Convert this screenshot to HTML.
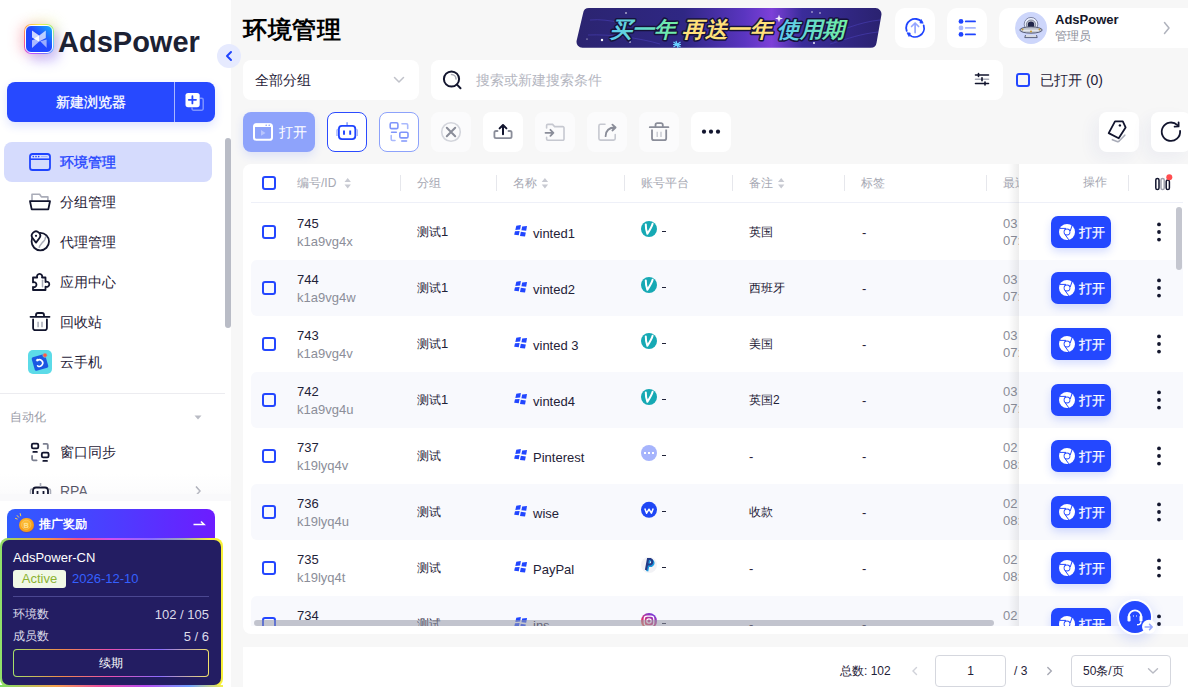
<!DOCTYPE html>
<html><head><meta charset="utf-8">
<style>
*{margin:0;padding:0;box-sizing:border-box}
html,body{width:1188px;height:687px;overflow:hidden;background:#f7f7f7;font-family:"Liberation Sans",sans-serif;color:#1f2238}
body{position:relative}
.a{position:absolute}
svg{position:absolute;overflow:visible}
#side{left:0;top:0;width:231px;height:687px;background:#fff;overflow:hidden}
.logoring{left:24px;top:24px;width:30px;height:30px;border-radius:7px;background:conic-gradient(from 0deg,#f5f04a,#9ef07a 15%,#6fd0ff 30%,#7a6cff 45%,#c050ff 58%,#ff5a8a 72%,#ffa050 86%,#f5f04a);box-shadow:-5px 0 12px rgba(255,120,140,.3),5px 7px 12px rgba(120,90,255,.35),4px -4px 12px rgba(220,240,120,.3)}.logo{left:25px;top:25px;width:28px;height:28px;border-radius:6px;background:linear-gradient(45deg,#2146ff 0%,#2247ff 55%,#1a8cff 85%,#12b4ff 100%);border:1px solid #fff}
.logotxt{left:58px;top:26px;font-size:29px;font-weight:bold;color:#1c2133;letter-spacing:0px;line-height:32px}
.collapse{left:217px;top:44px;width:24px;height:24px;border-radius:50%;background:#e6eafe}
.newbtn{left:7px;top:82px;width:208px;height:40px;border-radius:8px;background:#2749ff;box-shadow:0 4px 10px rgba(39,73,255,.15)}
.newbtn .t{left:0;width:167px;top:0;height:40px;line-height:40px;text-align:center;color:#fff;font-size:14px;-webkit-text-stroke:0.3px #fff}
.newbtn .d{left:167px;top:0;width:1px;height:40px;background:rgba(255,255,255,.6)}
.mi{left:4px;width:208px;height:40px;border-radius:8px}
.mi .t{left:56px;top:0;line-height:40px;font-size:14px;color:#1f2238}
.act{background:#d5dbfd}
.act .t{color:#2445ff;-webkit-text-stroke:0.35px #2445ff}
.sbar{left:225px;top:138px;width:6px;height:190px;border-radius:3px;background:#b9bcc6}
.card{background:#fff;border-radius:8px}
.tb{width:40px;height:40px;border-radius:8px;background:#fff;top:112px}
.tbf{background:#fbfbfc}
.th{top:165px;height:37px;line-height:37px;font-size:12px;color:#a6a8b3;white-space:nowrap}
.hd{top:175px;width:1px;height:16px;background:#e6e7ec}
.cb{width:14px;height:14px;border:2px solid #2447ff;border-radius:3px}
.row{left:251px;width:932px;height:56px;border-radius:6px}
.alt{background:#f8f9fd}
.c{font-size:13px;color:#1f2238;white-space:nowrap;line-height:16px}
.g{color:#8b8e99}
.ob{left:1051px;width:60px;height:32px;border-radius:7px;background:#2448ff;box-shadow:0 4px 8px rgba(36,72,255,.18);color:#fff;font-size:13px;-webkit-text-stroke:0.25px #fff}
</style></head><body>
<div id="side" class="a">
<div class="a logoring"></div>
<div class="a logo"></div>
<div class="a logotxt">AdsPower</div>
<div class="a newbtn"><div class="a t">新建浏览器</div><div class="a d"></div></div>
<div class="a mi act" style="top:142px"><div class="a t">环境管理</div></div>
<div class="a mi" style="top:182px"><div class="a t">分组管理</div></div>
<div class="a mi" style="top:222px"><div class="a t">代理管理</div></div>
<div class="a mi" style="top:262px"><div class="a t">应用中心</div></div>
<div class="a mi" style="top:302px"><div class="a t">回收站</div></div>
<div class="a mi" style="top:342px"><div class="a t">云手机</div></div>
<div class="a" style="left:0;top:393px;width:225px;height:1px;background:#ececf0"></div>
<div class="a" style="left:10px;top:410px;font-size:12px;line-height:15px;color:#9a9ca8">自动化</div>
<svg style="left:193px;top:414px" width="10" height="7"><path d="M1.5 1.5 L8.5 1.5 L5 5.5 Z" fill="#b9bbc4"/></svg>
<div class="a mi" style="top:432px"><div class="a t">窗口同步</div></div>
<div class="a mi" style="top:471px"><div class="a t">RPA</div></div>
<svg style="left:194px;top:485px" width="8" height="12"><path d="M2 1.5 L6 6 L2 10.5" fill="none" stroke="#9a9ca8" stroke-width="1.5"/></svg>
<div class="a" style="left:0;top:474px;width:231px;height:20px;background:linear-gradient(180deg,rgba(250,250,252,0),rgba(244,244,247,.35))"></div>
<div class="a" style="left:0;top:494px;width:231px;height:7px;background:#f9f9fb"></div>
<div class="a" style="left:0;top:501px;width:231px;height:186px;background:#fff"></div>
<div class="a" style="left:7px;top:509px;width:208px;height:34px;border-radius:8px 8px 0 0;background:linear-gradient(90deg,#2f5cff 0%,#4f3bff 55%,#6d1cff 100%)"></div>
<div class="a" style="left:19px;top:517.5px;width:14.5px;height:14.5px;border-radius:50%;background:radial-gradient(circle at 45% 40%,#ffc840,#f59a16 65%,#e07a10);box-shadow:0 1px 1px rgba(150,60,0,.3)"></div>
<div class="a" style="left:39px;top:517px;font-size:12px;font-weight:bold;line-height:15px;color:#fff">推广奖励</div>
<svg style="left:193px;top:520px" width="12" height="8"><path d="M0.5 4.5 H11 L8 1.5" fill="none" stroke="#fff" stroke-width="1.6"/></svg>
<div class="a" style="left:0;top:538px;width:223px;height:149px;border-radius:8px;background:linear-gradient(90deg,#8fe06a 0%,#f59a3c 20%,#f0508a 35%,#d04ff0 50%,#8a6cff 68%,#9aa8b8 82%,#f7f03a 94%)"></div>
<div class="a" style="left:0;top:685px;width:223px;height:2px;background:linear-gradient(90deg,#7ee067,#f6a04d 25%,#ec4fa0 45%,#b84cf2 65%,#6fa0ff 85%,#f6f04a)"></div>
<div class="a" style="left:2px;top:540px;width:219px;height:145px;border-radius:7px;background:#231d62"></div>
<div class="a" style="left:13px;top:550px;font-size:13px;line-height:15px;color:#fff">AdsPower-CN</div>
<div class="a" style="left:13px;top:570px;width:53px;height:18px;border-radius:3px;background:#f1f8e6;color:#8cb332;font-size:13px;line-height:18px;text-align:center">Active</div>
<div class="a" style="left:72px;top:571px;font-size:13px;line-height:16px;color:#3560ff">2026-12-10</div>
<div class="a" style="left:13px;top:596px;width:196px;height:1px;background:#4b4791"></div>
<div class="a" style="left:13px;top:607px;font-size:12px;line-height:15px;color:#dcdbea">环境数</div>
<div class="a" style="left:109px;top:607px;width:100px;text-align:right;font-size:13px;line-height:15px;color:#dcdbea">102 / 105</div>
<div class="a" style="left:13px;top:629px;font-size:12px;line-height:15px;color:#dcdbea">成员数</div>
<div class="a" style="left:109px;top:629px;width:100px;text-align:right;font-size:13px;line-height:15px;color:#dcdbea">5 / 6</div>
<div class="a" style="left:13px;top:649px;width:196px;height:28px;border-radius:4px;background:linear-gradient(90deg,#a6e06a,#f08a4a 25%,#e94fb0 50%,#8c6cff 75%,#f3e36a)"></div>
<div class="a" style="left:14px;top:650px;width:194px;height:26px;border-radius:3px;background:#231d62;color:#fff;font-size:12px;line-height:26px;text-align:center">续期</div>
<div class="a sbar"></div>
</div>
<div class="a collapse"></div>
<svg style="left:0;top:0;z-index:2" width="231" height="687" viewBox="0 0 231 687"><g fill="#fff"><path d="M32 30.5 L39.2 35.5 V41.5 L32 37.5 Z" opacity=".78"/><path d="M32 40.2 L37.2 38.6 L39.2 41.6 L32 48 Z" opacity=".62"/><path d="M45.8 30.5 V38 L39.2 41.5 V35.5 Z" opacity=".7"/><path d="M40.2 41.2 L46.6 39.6 V47.8 Z" opacity=".55"/><path d="M34 38.6 L39.2 35.6 V41.6 Z" opacity=".95"/></g><path d="M231 52 L227 56 L231 60" fill="none" stroke="#1f44ff" stroke-width="2" stroke-linecap="round" stroke-linejoin="round"/><path d="M199.7 98.2 H201.6 A1.6 1.6 0 0 1 203.2 99.8 V108.6 A1.6 1.6 0 0 1 201.6 110.2 H193.6 A1.6 1.6 0 0 1 192 108.6 V107.4" fill="none" stroke="#7d93ff" stroke-width="1.5"/><rect x="185.5" y="93" width="14.2" height="14.2" rx="2.6" fill="#fff"/><path d="M192.4 96.2 V103.4 M188.8 99.8 H196" stroke="#2749ff" stroke-width="1.8" stroke-linecap="round"/><rect x="30" y="154" width="20" height="16" rx="2.6" fill="none" stroke="#1f44ff" stroke-width="1.8"/><path d="M30 159.2 H50" stroke="#1f44ff" stroke-width="1.6"/><g fill="#1f44ff"><circle cx="33.3" cy="156.6" r=".8"/><circle cx="36" cy="156.6" r=".8"/><circle cx="38.7" cy="156.6" r=".8"/></g><path d="M41 156.6 H47.5" stroke="#8fa0ff" stroke-width=".8"/><path d="M32 201 V194.2 H39.6 L41.4 196.9 H47.9 V201" fill="none" stroke="#a9acb8" stroke-width="1.6" stroke-linejoin="round"/><path d="M30 201.2 H50 L48.3 209.4 H31.7 Z" fill="#fff" stroke="#12152e" stroke-width="1.8" stroke-linejoin="round"/><circle cx="40.3" cy="241.6" r="8.7" fill="#fff" stroke="#12152e" stroke-width="1.8"/><path d="M39.3 247.8 C39 245.5 41 245 41.8 243.3 C42.6 241.5 44 241.6 44.8 239.8 C45.3 238.6 45.2 237.5 46 236.4" fill="none" stroke="#a9acb8" stroke-width="1.5"/><path d="M36 242.6 L32.7 238.3 A4.2 4.2 0 1 1 39.3 238.3 Z" fill="#fff" stroke="#12152e" stroke-width="1.8" stroke-linejoin="round"/><circle cx="36" cy="235.8" r="1.1" fill="#12152e"/><path d="M33 277.5 H37.2 A2.6 2.6 0 1 1 42 277.5 H45.5 V282 A2.6 2.6 0 1 1 45.5 286.6 V290 H33 V287 A2.5 2.5 0 1 0 33 282.4 Z" fill="none" stroke="#12152e" stroke-width="1.8" stroke-linejoin="round"/><path d="M42.5 280.3 V286.8" stroke="#a9acb8" stroke-width="1.5" stroke-linecap="round"/><path d="M30.5 316.8 H49.5" stroke="#12152e" stroke-width="1.8" stroke-linecap="round"/><path d="M36 316.5 V315 A2 2 0 0 1 38 313 H42 A2 2 0 0 1 44 315 V316.5" fill="none" stroke="#12152e" stroke-width="1.8"/><path d="M33.1 319.3 V328 A2.2 2.2 0 0 0 35.3 330.2 H44.7 A2.2 2.2 0 0 0 46.9 328 V319.3" fill="none" stroke="#12152e" stroke-width="1.8" stroke-linecap="round"/><path d="M38.1 321.8 V327.2 M42 321.8 V327.2" stroke="#a9acb8" stroke-width="1.5"/><rect x="28" y="350" width="24" height="24" rx="5" fill="#5cdbe8"/><g transform="rotate(-16 40 362.5)"><rect x="33" y="355.5" width="14" height="14" rx="1.5" fill="#1b57e2"/></g><path d="M37.2 360.6 A3.3 3.3 0 1 1 37.6 365.8" fill="none" stroke="#fff" stroke-width="1.6" stroke-linecap="round"/><path d="M35.6 360.2 L37.6 358.4 L38.4 361.2 Z" fill="#fff"/><circle cx="45" cy="355.2" r="2.2" fill="#ff5a45" stroke="#5cdbe8" stroke-width=".6"/><g transform="translate(0 0)"><rect x="31.8" y="443.6" width="6.5" height="4.8" rx="1.3" fill="none" stroke="#12152e" stroke-width="1.8"/><path d="M33.3 451.9 H36.9" stroke="#12152e" stroke-width="1.8" stroke-linecap="round"/><rect x="41.8" y="452.6" width="6.8" height="4.8" rx="1.3" fill="none" stroke="#12152e" stroke-width="1.8"/><path d="M43.3 460.9 H47" stroke="#12152e" stroke-width="1.8" stroke-linecap="round"/><path d="M43.6 443.9 H46.6 A1.2 1.2 0 0 1 47.8 445.1 V448.6" fill="none" stroke="#7b7f90" stroke-width="1.8" stroke-linecap="round"/><path d="M32.1 456 V459.1 A1.2 1.2 0 0 0 33.3 460.3 H36.6" fill="none" stroke="#7b7f90" stroke-width="1.8" stroke-linecap="round"/></g><clipPath id="rpc"><rect x="0" y="470" width="231" height="24"/></clipPath><g clip-path="url(#rpc)"><rect x="33" y="487.5" width="15" height="14" rx="3" fill="none" stroke="#12152e" stroke-width="1.8"/><path d="M40.5 483 V487" stroke="#a9acb8" stroke-width="1.6"/><path d="M30.5 495 V490.5 A1.5 1.5 0 0 1 32 489 M50.5 495 V490.5 A1.5 1.5 0 0 0 49 489" fill="none" stroke="#a9acb8" stroke-width="1.5"/><path d="M37.5 491 V495 M43.5 491 V495" stroke="#12152e" stroke-width="1.8"/></g><path d="M17.2 515.6 L18.6 517.2 M20.2 513.6 L20.7 515.8 M15.5 518.4 L17.2 519" stroke="#ffd24a" stroke-width="1" stroke-linecap="round"/><circle cx="26.2" cy="524.8" r="4.6" fill="none" stroke="#ffe08a" stroke-width=".7" opacity=".6"/><text x="26.2" y="527.6" font-family="Liberation Sans, sans-serif" font-size="7.5" font-weight="bold" fill="#ffe6a0" text-anchor="middle" opacity=".85">B</text></svg><div class="a" style="left:243px;top:16px;font-size:24px;font-weight:bold;color:#000;line-height:28px;letter-spacing:0.5px">环境管理</div>
<svg style="left:0;top:0" width="1188" height="60" viewBox="0 0 1188 60">
<defs>
<linearGradient id="bng" x1="0" x2="1" y1="0" y2="0">
<stop offset="0" stop-color="#2b2470"/><stop offset=".35" stop-color="#2f2784"/><stop offset=".55" stop-color="#5a35c0"/><stop offset=".64" stop-color="#7d40d8"/><stop offset=".74" stop-color="#3a2c9a"/><stop offset="1" stop-color="#2a2270"/>
</linearGradient>
<linearGradient id="tg1" x1="0" x2="1"><stop offset="0" stop-color="#5cc8f2"/><stop offset="1" stop-color="#72f0a0"/></linearGradient>
<linearGradient id="tg2" x1="0" x2="1"><stop offset="0" stop-color="#5cc8f2"/><stop offset="1" stop-color="#72f0a0"/></linearGradient>
</defs>
<path d="M589 8 H875.5 A6 6 0 0 1 881.4 15 L876.6 42.5 A6 6 0 0 1 870.7 47.8 H582.5 A6 6 0 0 1 576.6 40.8 L583.1 13.3 A6 6 0 0 1 589 8 Z" fill="url(#bng)"/>
<g fill="none" stroke="#4a3fb8" stroke-width="1" opacity=".6"><path d="M590 20 C610 18 630 26 650 30 M588 35 C610 34 640 38 660 44"/><path d="M820 40 C840 30 860 22 880 20 M830 44 C850 38 860 34 878 32"/></g>
<g fill="#fff"><circle cx="626" cy="13" r=".8"/><circle cx="602" cy="40" r="1.2"/><circle cx="630" cy="42" r=".8"/><circle cx="812" cy="12" r=".7"/><circle cx="820" cy="13" r=".7"/><circle cx="814" cy="43" r=".9"/><circle cx="587" cy="39" r=".6"/></g>
<path d="M779 14.5 L780 17.5 L783 18.5 L780 19.5 L779 22.5 L778 19.5 L775 18.5 L778 17.5 Z" fill="#fff" opacity=".9"/>
<path d="M676 41 L678 48 M673 44.5 L681 44.5 M673.5 42 L680.5 47 M680.5 42 L673.5 47" stroke="#6ad0ff" stroke-width="1.2"/>
<g font-family="Liberation Sans, sans-serif" font-size="22" font-weight="bold" font-style="italic" stroke="#15123a" stroke-width="3" paint-order="stroke" stroke-linejoin="round">
<text x="610" y="37" fill="url(#tg1)" textLength="66" lengthAdjust="spacingAndGlyphs">买一年</text>
<text x="682" y="37" fill="#ffe07a" textLength="90" lengthAdjust="spacingAndGlyphs">再送一年</text>
<text x="777" y="37" fill="url(#tg2)" textLength="68" lengthAdjust="spacingAndGlyphs">使用期</text>
</g>
</svg>
<div class="a card" style="left:895px;top:8px;width:40px;height:40px;border-radius:10px"></div>
<div class="a card" style="left:947px;top:8px;width:40px;height:40px;border-radius:10px"></div>
<div class="a card" style="left:999px;top:8px;width:200px;height:40px;border-radius:10px"></div>
<div class="a" style="left:1015px;top:12px;width:32px;height:32px;border-radius:50%;background:#cdd6fb"></div>
<div class="a" style="left:1055px;top:12px;font-size:13px;font-weight:bold;color:#14172a;line-height:15px">AdsPower</div>
<div class="a" style="left:1055px;top:29px;font-size:12px;color:#8b8e99;line-height:15px">管理员</div>
<div class="a card" style="left:243px;top:60px;width:176px;height:40px"></div>
<div class="a" style="left:255px;top:72px;font-size:14px;line-height:16px;color:#1f2238">全部分组</div>
<div class="a card" style="left:431px;top:60px;width:572px;height:40px"></div>
<div class="a" style="left:476px;top:72px;font-size:14px;line-height:16px;color:#b4b6bf">搜索或新建搜索条件</div>
<div class="a cb" style="left:1016px;top:73px"></div>
<div class="a" style="left:1040px;top:72px;font-size:14px;line-height:16px;color:#1f2238">已打开 (0)</div>
<div class="a" style="left:243px;top:112px;width:72px;height:40px;border-radius:8px;background:#8ea3fb;box-shadow:0 4px 10px rgba(36,72,255,.12)"></div>
<div class="a" style="left:279px;top:124px;font-size:14px;line-height:16px;color:#fff">打开</div>
<div class="a tb" style="left:327px;border:1px solid #2b4bff"></div>
<div class="a tb" style="left:379px;border:1px solid #8da2fb"></div>
<div class="a tb tbf" style="left:431px"></div>
<div class="a tb" style="left:483px"></div>
<div class="a tb tbf" style="left:535px"></div>
<div class="a tb tbf" style="left:587px"></div>
<div class="a tb tbf" style="left:639px"></div>
<div class="a tb" style="left:691px"></div>
<div class="a tb" style="left:1099px;box-shadow:-6px 6px 16px rgba(40,60,160,.05)"></div>
<div class="a tb" style="left:1151px;box-shadow:-6px 6px 16px rgba(40,60,160,.05)"></div>
<div class="a card" style="left:243px;top:164px;width:950px;height:470px"></div>
<div class="a" style="left:251px;top:202px;width:932px;height:1px;background:#eef0f8"></div>
<div class="a cb" style="left:262px;top:176px"></div>
<div class="a th" style="left:297px">编号/ID</div>
<div class="a th" style="left:417px">分组</div>
<div class="a th" style="left:513px">名称</div>
<div class="a th" style="left:641px">账号平台</div>
<div class="a th" style="left:749px">备注</div>
<div class="a th" style="left:861px">标签</div>
<div class="a th" style="left:1003px">最近打开</div>
<div class="a hd" style="left:400px"></div>
<div class="a hd" style="left:496px"></div>
<div class="a hd" style="left:624px"></div>
<div class="a hd" style="left:732px"></div>
<div class="a hd" style="left:844px"></div>
<div class="a hd" style="left:986px"></div>
<div class="a" style="left:243px;top:203px;width:950px;height:423px;overflow:hidden">
<div class="a row" style="left:8px;top:1px"></div>
<div class="a cb" style="left:19px;top:22px"></div>
<div class="a c" style="left:54px;top:13px">745</div>
<div class="a c g" style="left:54px;top:31px">k1a9vg4x</div>
<div class="a c" style="left:174px;top:21px"><span style="font-size:12px">测试</span>1</div>
<div class="a c" style="left:290px;top:22.5px">vinted1</div>
<div class="a c" style="left:506px;top:21px;font-size:12px">英国</div>
<div class="a c" style="left:619px;top:22px">-</div>
<div class="a c g" style="left:760px;top:13px">03</div>
<div class="a c g" style="left:760px;top:30px">07:</div>
<svg style="left:0;top:0" width="950" height="423" viewBox="243 203 950 423"><g fill="#2146ff"><path d="M516.3 225.8 L520.9 225.1 L520.1 229.6 L515.3 230.1 Z"/><path d="M522.2 226.5 L527 226.1 L526.2 230.7 L521.4 230.3 Z"/><path d="M515 231.2 L519.6 230.9 L518.8 235.2 L514.2 234.8 Z"/><path d="M520.8 231.7 L525.8 232.4 L525 236.6 L520 236 Z"/></g><circle cx="649" cy="229" r="8" fill="#16a9b4"/><path d="M645.8 224.4 C645.6 228 646.4 231 647.4 233.8 C649.2 231 651.6 227.5 652.6 223.8" fill="none" stroke="#fff" stroke-width="2" stroke-linecap="round" stroke-linejoin="round"/><rect x="662" y="231" width="4" height="1" fill="#1f2238"/></svg><div class="a row alt" style="left:8px;top:57px"></div>
<div class="a cb" style="left:19px;top:78px"></div>
<div class="a c" style="left:54px;top:69px">744</div>
<div class="a c g" style="left:54px;top:87px">k1a9vg4w</div>
<div class="a c" style="left:174px;top:77px"><span style="font-size:12px">测试</span>1</div>
<div class="a c" style="left:290px;top:78.5px">vinted2</div>
<div class="a c" style="left:506px;top:77px;font-size:12px">西班牙</div>
<div class="a c" style="left:619px;top:78px">-</div>
<div class="a c g" style="left:760px;top:69px">03</div>
<div class="a c g" style="left:760px;top:86px">07:</div>
<svg style="left:0;top:0" width="950" height="423" viewBox="243 203 950 423"><g fill="#2146ff"><path d="M516.3 281.8 L520.9 281.1 L520.1 285.6 L515.3 286.1 Z"/><path d="M522.2 282.5 L527 282.1 L526.2 286.7 L521.4 286.3 Z"/><path d="M515 287.2 L519.6 286.9 L518.8 291.2 L514.2 290.8 Z"/><path d="M520.8 287.7 L525.8 288.4 L525 292.6 L520 292 Z"/></g><circle cx="649" cy="285" r="8" fill="#16a9b4"/><path d="M645.8 280.4 C645.6 284 646.4 287 647.4 289.8 C649.2 287 651.6 283.5 652.6 279.8" fill="none" stroke="#fff" stroke-width="2" stroke-linecap="round" stroke-linejoin="round"/><rect x="662" y="287" width="4" height="1" fill="#1f2238"/></svg><div class="a row" style="left:8px;top:113px"></div>
<div class="a cb" style="left:19px;top:134px"></div>
<div class="a c" style="left:54px;top:125px">743</div>
<div class="a c g" style="left:54px;top:143px">k1a9vg4v</div>
<div class="a c" style="left:174px;top:133px"><span style="font-size:12px">测试</span>1</div>
<div class="a c" style="left:290px;top:134.5px">vinted 3</div>
<div class="a c" style="left:506px;top:133px;font-size:12px">美国</div>
<div class="a c" style="left:619px;top:134px">-</div>
<div class="a c g" style="left:760px;top:125px">03</div>
<div class="a c g" style="left:760px;top:142px">07:</div>
<svg style="left:0;top:0" width="950" height="423" viewBox="243 203 950 423"><g fill="#2146ff"><path d="M516.3 337.8 L520.9 337.1 L520.1 341.6 L515.3 342.1 Z"/><path d="M522.2 338.5 L527 338.1 L526.2 342.7 L521.4 342.3 Z"/><path d="M515 343.2 L519.6 342.9 L518.8 347.2 L514.2 346.8 Z"/><path d="M520.8 343.7 L525.8 344.4 L525 348.6 L520 348 Z"/></g><circle cx="649" cy="341" r="8" fill="#16a9b4"/><path d="M645.8 336.4 C645.6 340 646.4 343 647.4 345.8 C649.2 343 651.6 339.5 652.6 335.8" fill="none" stroke="#fff" stroke-width="2" stroke-linecap="round" stroke-linejoin="round"/><rect x="662" y="343" width="4" height="1" fill="#1f2238"/></svg><div class="a row alt" style="left:8px;top:169px"></div>
<div class="a cb" style="left:19px;top:190px"></div>
<div class="a c" style="left:54px;top:181px">742</div>
<div class="a c g" style="left:54px;top:199px">k1a9vg4u</div>
<div class="a c" style="left:174px;top:189px"><span style="font-size:12px">测试</span>1</div>
<div class="a c" style="left:290px;top:190.5px">vinted4</div>
<div class="a c" style="left:506px;top:189px;font-size:12px">英国2</div>
<div class="a c" style="left:619px;top:190px">-</div>
<div class="a c g" style="left:760px;top:181px">03</div>
<div class="a c g" style="left:760px;top:198px">07:</div>
<svg style="left:0;top:0" width="950" height="423" viewBox="243 203 950 423"><g fill="#2146ff"><path d="M516.3 393.8 L520.9 393.1 L520.1 397.6 L515.3 398.1 Z"/><path d="M522.2 394.5 L527 394.1 L526.2 398.7 L521.4 398.3 Z"/><path d="M515 399.2 L519.6 398.9 L518.8 403.2 L514.2 402.8 Z"/><path d="M520.8 399.7 L525.8 400.4 L525 404.6 L520 404 Z"/></g><circle cx="649" cy="397" r="8" fill="#16a9b4"/><path d="M645.8 392.4 C645.6 396 646.4 399 647.4 401.8 C649.2 399 651.6 395.5 652.6 391.8" fill="none" stroke="#fff" stroke-width="2" stroke-linecap="round" stroke-linejoin="round"/><rect x="662" y="399" width="4" height="1" fill="#1f2238"/></svg><div class="a row" style="left:8px;top:225px"></div>
<div class="a cb" style="left:19px;top:246px"></div>
<div class="a c" style="left:54px;top:237px">737</div>
<div class="a c g" style="left:54px;top:255px">k19lyq4v</div>
<div class="a c" style="left:174px;top:245px"><span style="font-size:12px">测试</span></div>
<div class="a c" style="left:290px;top:246.5px">Pinterest</div>
<div class="a c" style="left:506px;top:246px;font-size:13px">-</div>
<div class="a c" style="left:619px;top:246px">-</div>
<div class="a c g" style="left:760px;top:237px">02</div>
<div class="a c g" style="left:760px;top:254px">08:</div>
<svg style="left:0;top:0" width="950" height="423" viewBox="243 203 950 423"><g fill="#2146ff"><path d="M516.3 449.8 L520.9 449.1 L520.1 453.6 L515.3 454.1 Z"/><path d="M522.2 450.5 L527 450.1 L526.2 454.7 L521.4 454.3 Z"/><path d="M515 455.2 L519.6 454.9 L518.8 459.2 L514.2 458.8 Z"/><path d="M520.8 455.7 L525.8 456.4 L525 460.6 L520 460 Z"/></g><circle cx="649" cy="453" r="8" fill="#a6b4fc"/><g fill="#fff"><rect x="644" y="452" width="2" height="2"/><rect x="648" y="452" width="2" height="2"/><rect x="652" y="452" width="2" height="2"/></g><rect x="662" y="455" width="4" height="1" fill="#1f2238"/></svg><div class="a row alt" style="left:8px;top:281px"></div>
<div class="a cb" style="left:19px;top:302px"></div>
<div class="a c" style="left:54px;top:293px">736</div>
<div class="a c g" style="left:54px;top:311px">k19lyq4u</div>
<div class="a c" style="left:174px;top:301px"><span style="font-size:12px">测试</span></div>
<div class="a c" style="left:290px;top:302.5px">wise</div>
<div class="a c" style="left:506px;top:301px;font-size:12px">收款</div>
<div class="a c" style="left:619px;top:302px">-</div>
<div class="a c g" style="left:760px;top:293px">02</div>
<div class="a c g" style="left:760px;top:310px">08:</div>
<svg style="left:0;top:0" width="950" height="423" viewBox="243 203 950 423"><g fill="#2146ff"><path d="M516.3 505.8 L520.9 505.1 L520.1 509.6 L515.3 510.1 Z"/><path d="M522.2 506.5 L527 506.1 L526.2 510.7 L521.4 510.3 Z"/><path d="M515 511.2 L519.6 510.9 L518.8 515.2 L514.2 514.8 Z"/><path d="M520.8 511.7 L525.8 512.4 L525 516.6 L520 516 Z"/></g><circle cx="649" cy="509.8" r="8" fill="#1f47f5"/><path d="M644.8 508.5 L646.6 513.2 L649 509.2 L651.4 513.2 L653.2 508.5" fill="none" stroke="#fff" stroke-width="1.5" stroke-linejoin="round"/><rect x="662" y="511" width="4" height="1" fill="#1f2238"/></svg><div class="a row" style="left:8px;top:337px"></div>
<div class="a cb" style="left:19px;top:358px"></div>
<div class="a c" style="left:54px;top:349px">735</div>
<div class="a c g" style="left:54px;top:367px">k19lyq4t</div>
<div class="a c" style="left:174px;top:357px"><span style="font-size:12px">测试</span></div>
<div class="a c" style="left:290px;top:358.5px">PayPal</div>
<div class="a c" style="left:506px;top:358px;font-size:13px">-</div>
<div class="a c" style="left:619px;top:358px">-</div>
<div class="a c g" style="left:760px;top:349px">02</div>
<div class="a c g" style="left:760px;top:366px">08:</div>
<svg style="left:0;top:0" width="950" height="423" viewBox="243 203 950 423"><g fill="#2146ff"><path d="M516.3 561.8 L520.9 561.1 L520.1 565.6 L515.3 566.1 Z"/><path d="M522.2 562.5 L527 562.1 L526.2 566.7 L521.4 566.3 Z"/><path d="M515 567.2 L519.6 566.9 L518.8 571.2 L514.2 570.8 Z"/><path d="M520.8 567.7 L525.8 568.4 L525 572.6 L520 572 Z"/></g><circle cx="649" cy="565" r="8" fill="#f2f2f5"/><path d="M647.2 564.5 H650.5 A3 3 0 0 0 650.5 559 H648 L646 570" fill="none" stroke="#1a9ae0" stroke-width="2.2" transform="translate(1.2 1.3)"/><path d="M647.2 564.5 H650.5 A3 3 0 0 0 650.5 559 H648 L646 570" fill="none" stroke="#233a86" stroke-width="2.2"/><rect x="662" y="567" width="4" height="1" fill="#1f2238"/></svg><div class="a row alt" style="left:8px;top:393px"></div>
<div class="a cb" style="left:19px;top:414px"></div>
<div class="a c" style="left:54px;top:405px">734</div>
<div class="a c g" style="left:54px;top:423px"></div>
<div class="a c" style="left:174px;top:413px"><span style="font-size:12px">测试</span></div>
<div class="a c" style="left:290px;top:414.5px">ins</div>
<div class="a c" style="left:506px;top:414px;font-size:13px">-</div>
<div class="a c" style="left:619px;top:414px">-</div>
<div class="a c g" style="left:760px;top:405px">02</div>
<div class="a c g" style="left:760px;top:422px"></div>
<svg style="left:0;top:0" width="950" height="423" viewBox="243 203 950 423"><g fill="#2146ff"><path d="M516.3 617.8 L520.9 617.1 L520.1 621.6 L515.3 622.1 Z"/><path d="M522.2 618.5 L527 618.1 L526.2 622.7 L521.4 622.3 Z"/><path d="M515 623.2 L519.6 622.9 L518.8 627.2 L514.2 626.8 Z"/><path d="M520.8 623.7 L525.8 624.4 L525 628.6 L520 628 Z"/></g><defs><linearGradient id="igg" x1="0" y1="1" x2="0.6" y2="0"><stop offset="0" stop-color="#f58a2c"/><stop offset=".45" stop-color="#e0306a"/><stop offset="1" stop-color="#7a3ad8"/></linearGradient></defs><circle cx="649" cy="621" r="8" fill="url(#igg)"/><rect x="644.2" y="616.2" width="9.6" height="9.6" rx="2.8" fill="none" stroke="#fff" stroke-width="1.2"/><circle cx="649" cy="621" r="2.2" fill="none" stroke="#fff" stroke-width="1.2"/><rect x="662" y="623" width="4" height="1" fill="#1f2238"/></svg></div>
<div class="a" style="left:1008px;top:164px;width:11px;height:462px;background:linear-gradient(90deg,rgba(0,0,0,0),rgba(0,0,0,.07))"></div>
<div class="a" style="left:1019px;top:164px;width:169px;height:462px;overflow:hidden">
<div class="a" style="left:0;top:0;width:174px;height:470px;background:#fff;box-shadow:-4px 0 6px rgba(0,0,0,.04);border-top-right-radius:8px"></div>
<div class="a th" style="left:64px;top:0">操作</div>
<div class="a hd" style="left:109px;top:11px"></div>
<div class="a" style="left:0;top:38px;width:164px;height:1px;background:#eef0f8"></div>
<div class="a ob" style="left:32px;top:52px"><span class="a" style="left:28px;top:9px;line-height:16px">打开</span></div>
<svg style="left:0;top:0" width="169" height="462" viewBox="1019 164 169 462"><circle cx="1067" cy="232" r="8" fill="#fff"/><circle cx="1067" cy="232" r="3.4" fill="#2448ff"/><circle cx="1067" cy="232" r="2.5" fill="#fff"/><path d="M1066 228.4 H1059.5 M1070.2 231 L1072.2 225.2 M1065.2 234.8 L1068.8 239.8" stroke="#2448ff" stroke-width="1"/><g fill="#14172e"><circle cx="1159" cy="224.4" r="1.9"/><circle cx="1159" cy="232" r="1.9"/><circle cx="1159" cy="239.6" r="1.9"/></g></svg><div class="a alt" style="left:0;top:96px;width:164px;height:56px;border-radius:0"></div>
<div class="a ob" style="left:32px;top:108px"><span class="a" style="left:28px;top:9px;line-height:16px">打开</span></div>
<svg style="left:0;top:0" width="169" height="462" viewBox="1019 164 169 462"><circle cx="1067" cy="288" r="8" fill="#fff"/><circle cx="1067" cy="288" r="3.4" fill="#2448ff"/><circle cx="1067" cy="288" r="2.5" fill="#fff"/><path d="M1066 284.4 H1059.5 M1070.2 287 L1072.2 281.2 M1065.2 290.8 L1068.8 295.8" stroke="#2448ff" stroke-width="1"/><g fill="#14172e"><circle cx="1159" cy="280.4" r="1.9"/><circle cx="1159" cy="288" r="1.9"/><circle cx="1159" cy="295.6" r="1.9"/></g></svg><div class="a ob" style="left:32px;top:164px"><span class="a" style="left:28px;top:9px;line-height:16px">打开</span></div>
<svg style="left:0;top:0" width="169" height="462" viewBox="1019 164 169 462"><circle cx="1067" cy="344" r="8" fill="#fff"/><circle cx="1067" cy="344" r="3.4" fill="#2448ff"/><circle cx="1067" cy="344" r="2.5" fill="#fff"/><path d="M1066 340.4 H1059.5 M1070.2 343 L1072.2 337.2 M1065.2 346.8 L1068.8 351.8" stroke="#2448ff" stroke-width="1"/><g fill="#14172e"><circle cx="1159" cy="336.4" r="1.9"/><circle cx="1159" cy="344" r="1.9"/><circle cx="1159" cy="351.6" r="1.9"/></g></svg><div class="a alt" style="left:0;top:208px;width:164px;height:56px;border-radius:0"></div>
<div class="a ob" style="left:32px;top:220px"><span class="a" style="left:28px;top:9px;line-height:16px">打开</span></div>
<svg style="left:0;top:0" width="169" height="462" viewBox="1019 164 169 462"><circle cx="1067" cy="400" r="8" fill="#fff"/><circle cx="1067" cy="400" r="3.4" fill="#2448ff"/><circle cx="1067" cy="400" r="2.5" fill="#fff"/><path d="M1066 396.4 H1059.5 M1070.2 399 L1072.2 393.2 M1065.2 402.8 L1068.8 407.8" stroke="#2448ff" stroke-width="1"/><g fill="#14172e"><circle cx="1159" cy="392.4" r="1.9"/><circle cx="1159" cy="400" r="1.9"/><circle cx="1159" cy="407.6" r="1.9"/></g></svg><div class="a ob" style="left:32px;top:276px"><span class="a" style="left:28px;top:9px;line-height:16px">打开</span></div>
<svg style="left:0;top:0" width="169" height="462" viewBox="1019 164 169 462"><circle cx="1067" cy="456" r="8" fill="#fff"/><circle cx="1067" cy="456" r="3.4" fill="#2448ff"/><circle cx="1067" cy="456" r="2.5" fill="#fff"/><path d="M1066 452.4 H1059.5 M1070.2 455 L1072.2 449.2 M1065.2 458.8 L1068.8 463.8" stroke="#2448ff" stroke-width="1"/><g fill="#14172e"><circle cx="1159" cy="448.4" r="1.9"/><circle cx="1159" cy="456" r="1.9"/><circle cx="1159" cy="463.6" r="1.9"/></g></svg><div class="a alt" style="left:0;top:320px;width:164px;height:56px;border-radius:0"></div>
<div class="a ob" style="left:32px;top:332px"><span class="a" style="left:28px;top:9px;line-height:16px">打开</span></div>
<svg style="left:0;top:0" width="169" height="462" viewBox="1019 164 169 462"><circle cx="1067" cy="512" r="8" fill="#fff"/><circle cx="1067" cy="512" r="3.4" fill="#2448ff"/><circle cx="1067" cy="512" r="2.5" fill="#fff"/><path d="M1066 508.4 H1059.5 M1070.2 511 L1072.2 505.2 M1065.2 514.8 L1068.8 519.8" stroke="#2448ff" stroke-width="1"/><g fill="#14172e"><circle cx="1159" cy="504.4" r="1.9"/><circle cx="1159" cy="512" r="1.9"/><circle cx="1159" cy="519.6" r="1.9"/></g></svg><div class="a ob" style="left:32px;top:388px"><span class="a" style="left:28px;top:9px;line-height:16px">打开</span></div>
<svg style="left:0;top:0" width="169" height="462" viewBox="1019 164 169 462"><circle cx="1067" cy="568" r="8" fill="#fff"/><circle cx="1067" cy="568" r="3.4" fill="#2448ff"/><circle cx="1067" cy="568" r="2.5" fill="#fff"/><path d="M1066 564.4 H1059.5 M1070.2 567 L1072.2 561.2 M1065.2 570.8 L1068.8 575.8" stroke="#2448ff" stroke-width="1"/><g fill="#14172e"><circle cx="1159" cy="560.4" r="1.9"/><circle cx="1159" cy="568" r="1.9"/><circle cx="1159" cy="575.6" r="1.9"/></g></svg><div class="a alt" style="left:0;top:432px;width:164px;height:56px;border-radius:0"></div>
<div class="a ob" style="left:32px;top:444px"><span class="a" style="left:28px;top:9px;line-height:16px">打开</span></div>
<svg style="left:0;top:0" width="169" height="462" viewBox="1019 164 169 462"><circle cx="1067" cy="624" r="8" fill="#fff"/><circle cx="1067" cy="624" r="3.4" fill="#2448ff"/><circle cx="1067" cy="624" r="2.5" fill="#fff"/><path d="M1066 620.4 H1059.5 M1070.2 623 L1072.2 617.2 M1065.2 626.8 L1068.8 631.8" stroke="#2448ff" stroke-width="1"/><g fill="#14172e"><circle cx="1159" cy="616.4" r="1.9"/><circle cx="1159" cy="624" r="1.9"/><circle cx="1159" cy="631.6" r="1.9"/></g></svg></div>
<div class="a" style="left:1176px;top:207px;width:6px;height:63px;border-radius:3px;background:#c4c6cf"></div>
<div class="a" style="left:254px;top:620px;width:740px;height:6px;border-radius:3px;background:rgba(150,153,168,.55)"></div>
<div class="a" style="left:243px;top:647px;width:945px;height:40px;background:#fff"></div>
<div class="a" style="left:840px;top:663px;font-size:12px;line-height:16px;color:#1f2238">总数: 102</div>
<div class="a" style="left:935px;top:655px;width:71px;height:32px;border:1px solid #d5d7de;border-radius:4px;background:#fff"></div>
<div class="a" style="left:935px;top:663px;width:71px;text-align:center;font-size:12px;line-height:16px">1</div>
<div class="a" style="left:1014px;top:663px;font-size:12px;line-height:16px">/ 3</div>
<div class="a" style="left:1071px;top:655px;width:100px;height:32px;border:1px solid #d5d7de;border-radius:4px;background:#fff"></div>
<div class="a" style="left:1083px;top:663px;font-size:12px;line-height:16px">50条/页</div>
<div class="a" style="left:1117px;top:599px;width:36px;height:36px;border-radius:50%;background:#fff;box-shadow:0 4px 14px rgba(36,72,255,.18)"></div>
<div class="a" style="left:1119px;top:601px;width:32px;height:32px;border-radius:50%;background:#2448ff"></div>
<svg style="left:0;top:0;z-index:4" width="1188" height="687" viewBox="0 0 1188 687"><path d="M1128.8 616.5 A6.2 6.2 0 0 1 1141.2 616.5" fill="none" stroke="#fff" stroke-width="1.8"/><path d="M1130 612.5 A5 5 0 0 1 1140 612.5 V622 A2.5 2.5 0 0 1 1137.5 624.5 H1132.5 A2.5 2.5 0 0 1 1130 622 Z" fill="#fff" opacity="0"/><rect x="1127.5" y="615.5" width="3" height="6" rx="1.2" fill="#fff"/><rect x="1139.5" y="615.5" width="3" height="6" rx="1.2" fill="#fff"/><path d="M1141 621.5 C1141 623.8 1139.5 624.8 1137 624.8" fill="none" stroke="#fff" stroke-width="1.4"/><path d="M1133.5 615 V617 M1136.5 615 V617" stroke="#8fa2ff" stroke-width="1"/><circle cx="1149" cy="626.8" r="7" fill="#fff"/><path d="M1145.2 627 H1152.2 M1149.6 624.4 L1152.2 627 L1149.6 629.6" fill="none" stroke="#98a8ff" stroke-width="1.6" stroke-linecap="round" stroke-linejoin="round"/></svg><svg style="left:0;top:0;z-index:3" width="1188" height="687" viewBox="0 0 1188 687"><g fill="none" stroke="#1f44ff" stroke-width="1.8" stroke-linecap="round"><path d="M906.7 30.9 A8.9 8.9 0 0 1 921.7 21.9"/><path d="M923.7 25.45 A8.9 8.9 0 0 1 908.6 34"/></g><path d="M921.2 19.4 L923.2 23.2 L919.9 23 Z M909 36.6 L907 32.8 L910.3 33 Z" fill="#1f44ff" stroke="#1f44ff" stroke-width=".7" stroke-linejoin="round"/><path d="M915.1 32.6 V23 M911.6 26.5 L915.1 23 L918.6 26.5" fill="none" stroke="#94a6ff" stroke-width="1.7" stroke-linecap="round" stroke-linejoin="round"/><g fill="#1f44ff"><circle cx="961" cy="21.4" r="2.4"/><circle cx="961" cy="34.4" r="2.4"/></g><circle cx="961" cy="27.9" r="2.4" fill="#a9b7ff"/><path d="M965.8 21.4 H975 M965.8 34.4 H975" stroke="#1f44ff" stroke-width="1.9" stroke-linecap="round"/><path d="M965.8 27.9 H975" stroke="#a9b7ff" stroke-width="1.9" stroke-linecap="round"/><path d="M1025.5 35 L1024.8 37.6 H1037.2 L1036.5 35" fill="#d8dbe3" stroke="#3c4260" stroke-width=".8"/><circle cx="1031" cy="24.2" r="6.8" fill="#e9eefc" stroke="#5a6080" stroke-width=".7"/><circle cx="1031" cy="24.6" r="4.6" fill="#c9ccd8" stroke="#40465e" stroke-width=".6"/><circle cx="1031" cy="24.8" r="3.2" fill="#1f2448"/><path d="M1028.8 28.6 L1031 30.2 L1033.2 28.6 Z" fill="#fff"/><ellipse cx="1031" cy="30" rx="11.2" ry="3.2" fill="#bfc3cd" stroke="#3c4260" stroke-width=".8"/><path d="M1023 30.5 H1039" stroke="#e4e6ec" stroke-width="1.6"/><circle cx="1031" cy="31.4" r="1" fill="#c89a30"/><circle cx="1022.6" cy="29.4" r=".9" fill="#c89a30"/><circle cx="1039.4" cy="29.4" r=".9" fill="#c89a30"/><path d="M1164.5 22.5 L1169 28 L1164.5 33.5" fill="none" stroke="#b0b3bd" stroke-width="1.5" stroke-linecap="round" stroke-linejoin="round"/><path d="M394.5 77.5 L399 82 L403.5 77.5" fill="none" stroke="#c0c2ca" stroke-width="1.5" stroke-linecap="round" stroke-linejoin="round"/><circle cx="451.5" cy="79" r="7.6" fill="none" stroke="#12152e" stroke-width="2"/><path d="M457 84.6 L460.5 88.2" stroke="#12152e" stroke-width="2" stroke-linecap="round"/><path d="M451.5 74.5 A4.5 4.5 0 0 1 456 79" fill="none" stroke="#a9acb8" stroke-width="1.5" stroke-linecap="round"/><g stroke="#12152e" stroke-width="1.6" stroke-linecap="round"><path d="M975.5 75 H988.5 M975.5 83.5 H988.5"/><path d="M978.5 73.5 V76.5 M985 82 V85"/></g><path d="M975.5 79.3 H988.5" stroke="#a9acb8" stroke-width="1.6" stroke-linecap="round"/><path d="M982 77.8 V80.8" stroke="#12152e" stroke-width="1.6" stroke-linecap="round"/><rect x="254" y="124.2" width="18" height="15.6" rx="2.4" fill="none" stroke="#fff" stroke-width="2"/><rect x="254" y="123.5" width="18" height="3.6" rx="1.5" fill="#fff"/><circle cx="266.2" cy="125.3" r=".8" fill="#8ea3fb"/><circle cx="269.2" cy="125.3" r=".8" fill="#8ea3fb"/><path d="M261 130 L265.5 133 L261 135.8 Z" fill="#b9c5fd"/><rect x="338.9" y="125.9" width="16.4" height="13.2" rx="3" fill="none" stroke="#1f44ff" stroke-width="1.8"/><path d="M347.1 122.2 V125" stroke="#8ea3fb" stroke-width="1.6"/><path d="M337 136 V130.5 A1.5 1.5 0 0 1 338 129.2 M357.2 136 V130.5 A1.5 1.5 0 0 0 356.2 129.2" fill="none" stroke="#a5b4fc" stroke-width="1.5"/><path d="M344 130.5 V134.8 M350.2 130.5 V134.8" stroke="#1f44ff" stroke-width="1.9"/><rect x="390.2" y="122.8" width="7.7" height="5.8" rx="1.4" fill="none" stroke="#7f95fb" stroke-width="1.6"/><path d="M391.6 132.2 H396.3" stroke="#7f95fb" stroke-width="1.6" stroke-linecap="round"/><rect x="399.8" y="132.2" width="8.2" height="5.7" rx="1.4" fill="none" stroke="#7f95fb" stroke-width="1.6"/><path d="M401.8 141 H406.5" stroke="#7f95fb" stroke-width="1.6" stroke-linecap="round"/><path d="M402 123.8 H406.5 A1.2 1.2 0 0 1 407.7 125 V128.5" fill="none" stroke="#a9b9fd" stroke-width="1.6" stroke-linecap="round"/><path d="M391.2 135.6 V139.3 A1.2 1.2 0 0 0 392.4 140.5 H395" fill="none" stroke="#a9b9fd" stroke-width="1.6" stroke-linecap="round"/><circle cx="451" cy="132" r="9.3" fill="none" stroke="#d3d5dc" stroke-width="1.6"/><path d="M446.8 127.8 L455.2 136.2 M455.2 127.8 L446.8 136.2" stroke="#8a8d99" stroke-width="2" stroke-linecap="round"/><path d="M497.5 131 H496 A1.6 1.6 0 0 0 494.4 132.6 V136.6 A1.6 1.6 0 0 0 496 138.2 H510 A1.6 1.6 0 0 0 511.6 136.6 V132.6 A1.6 1.6 0 0 0 510 131 H508.5" fill="none" stroke="#8a8d99" stroke-width="1.8" stroke-linecap="round"/><path d="M503 134.2 V125.2 M499.6 128.4 L503 125 L506.4 128.4" fill="none" stroke="#12152e" stroke-width="2" stroke-linecap="round" stroke-linejoin="round"/><path d="M546.6 128 V125.6 A1.2 1.2 0 0 1 547.8 124.4 H552.6 L554.6 126.6 H562.8 A1.2 1.2 0 0 1 564 127.8 V139 A1.2 1.2 0 0 1 562.8 140.2 H547.8 A1.2 1.2 0 0 1 546.6 139 V137.4" fill="none" stroke="#c6c8d0" stroke-width="1.6" stroke-linecap="round"/><path d="M545.5 132.8 H553.4 M550.4 129.8 L553.4 132.8 L550.4 135.8" fill="none" stroke="#8a8d99" stroke-width="1.8" stroke-linecap="round" stroke-linejoin="round"/><path d="M605 124.3 H600.5 A1.6 1.6 0 0 0 598.9 125.9 V138.5 A1.6 1.6 0 0 0 600.5 140.1 H613.6 A1.6 1.6 0 0 0 615.2 138.5 V134.5" fill="none" stroke="#c6c8d0" stroke-width="1.6" stroke-linecap="round"/><path d="M605.6 136.2 C605.8 131 609 127.5 615 127.5 M612.4 124.6 L615.6 127.5 L612.4 130.5" fill="none" stroke="#8a8d99" stroke-width="1.8" stroke-linecap="round" stroke-linejoin="round"/><path d="M649.8 127.2 H668.4" stroke="#8a8d99" stroke-width="1.8" stroke-linecap="round"/><path d="M655.5 127 V125 A1.8 1.8 0 0 1 657.3 123.2 H661 A1.8 1.8 0 0 1 662.8 125 V127" fill="none" stroke="#8a8d99" stroke-width="1.8"/><path d="M652 129.5 V138.2 A2 2 0 0 0 654 140.2 H664.2 A2 2 0 0 0 666.2 138.2 V129.5" fill="none" stroke="#8a8d99" stroke-width="1.8"/><path d="M657.2 131.8 V137 M661 131.8 V137" stroke="#c6c8d0" stroke-width="1.4"/><g fill="#12152e"><circle cx="704" cy="131.7" r="2.1"/><circle cx="711" cy="131.7" r="2.1"/><circle cx="718" cy="131.7" r="2.1"/></g><path d="M1112.4 139.7 L1117 141.5 Q1118.5 142 1119.4 140.8 L1124.8 135.2" fill="none" stroke="#a9acb8" stroke-width="1.6" stroke-linecap="round" stroke-linejoin="round"/><path d="M1115 121.4 H1122.8 L1125.6 127.4 L1118.7 138.2 L1108.7 133.1 Z" fill="#fff" stroke="#12152e" stroke-width="1.8" stroke-linejoin="round"/><circle cx="1119.9" cy="125.4" r="1.2" fill="#12152e"/><path d="M1180.1 131 A9.2 9.2 0 1 1 1177.4 125.2" fill="none" stroke="#12152e" stroke-width="1.8" stroke-linecap="round"/><path d="M1174.6 126.6 L1178.6 126.4 L1178.6 122.4" fill="none" stroke="#12152e" stroke-width="1.8" stroke-linecap="round" stroke-linejoin="round"/><path d="M344.5 182 L347.7 178 L350.9 182 Z M344.5 184.5 L347.7 188.5 L350.9 184.5 Z" fill="#c8cad2"/><path d="M541.7 182 L544.9000000000001 178 L548.1 182 Z M541.7 184.5 L544.9000000000001 188.5 L548.1 184.5 Z" fill="#c8cad2"/><path d="M778 182 L781.2 178 L784.4 182 Z M778 184.5 L781.2 188.5 L784.4 184.5 Z" fill="#c8cad2"/><rect x="1155.8" y="178.5" width="3.2" height="11" rx="1.6" fill="none" stroke="#12152e" stroke-width="1.5"/><rect x="1161" y="178.5" width="3.2" height="11" rx="1.6" fill="none" stroke="#9ea1ad" stroke-width="1.5"/><rect x="1166.2" y="180" width="3.2" height="9.5" rx="1.6" fill="none" stroke="#12152e" stroke-width="1.5"/><circle cx="1169.3" cy="177.3" r="3" fill="#ff4d4f"/><path d="M916.5 667.5 L913 671 L916.5 674.5" fill="none" stroke="#d0d2d9" stroke-width="1.4" stroke-linecap="round"/><path d="M1047.8 667.5 L1051.3 671 L1047.8 674.5" fill="none" stroke="#a6a8b3" stroke-width="1.4" stroke-linecap="round"/><path d="M1148.5 668.8 L1153 673 L1157.5 668.8" fill="none" stroke="#b8bac3" stroke-width="1.4" stroke-linecap="round" stroke-linejoin="round"/></svg></body></html>
